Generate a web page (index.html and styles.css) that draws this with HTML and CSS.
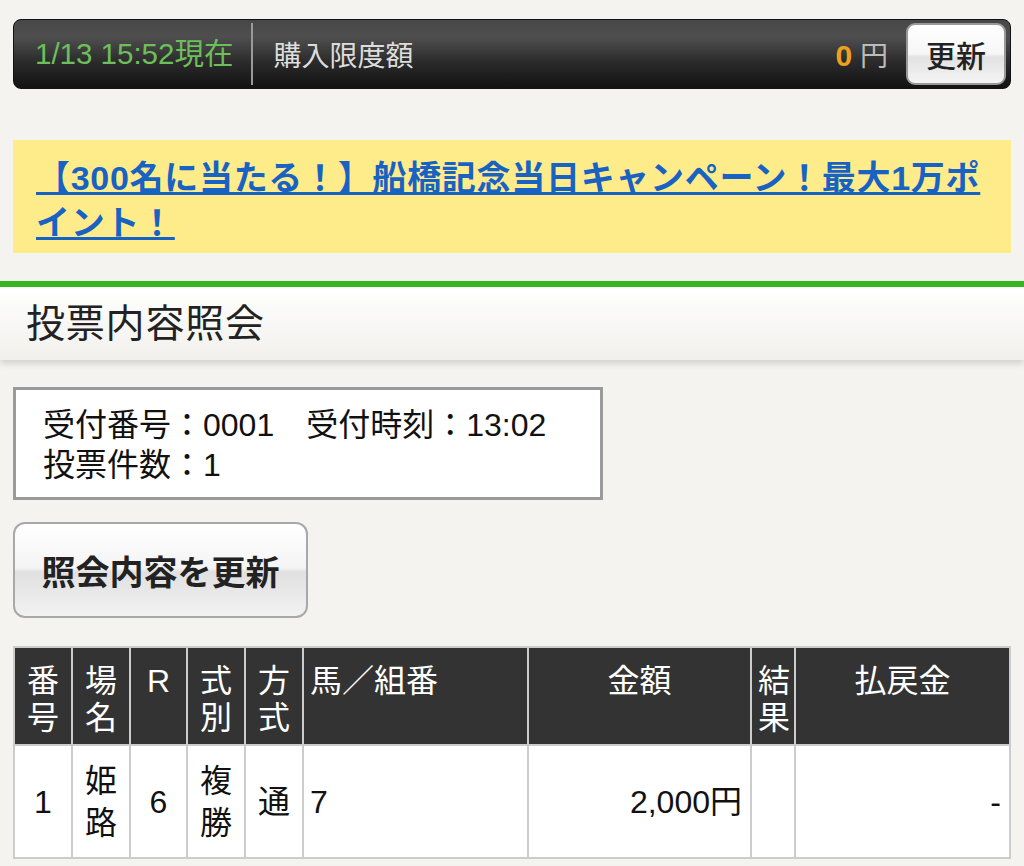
FILE: index.html
```html
<!DOCTYPE html>
<html lang="ja">
<head>
  <meta charset="UTF-8">
  <meta name="viewport" content="width=device-width, initial-scale=1.0">
  <title>投票内容照会</title>
  <link rel="stylesheet" href="styles.css">
</head>
<body>
  <div class="topbar">
    <span class="now">1/13 15:52現在</span>
    <span class="limit-label">購入限度額</span>
    <span class="limit-value"><b>0</b> 円</span>
    <button class="refresh">更新</button>
  </div>

  <div class="banner">
    <a href="#">【300名に当たる！】船橋記念当日キャンペーン！最大1万ポイント！</a>
  </div>

  <div class="page-head">
    <h1>投票内容照会</h1>
  </div>

  <div class="content">
    <div class="info">
      受付番号：0001　受付時刻：13:02<br>
      投票件数：1
    </div>

    <button class="reload">照会内容を更新</button>

    <table class="bets">
      <colgroup>
        <col class="c-narrow">
        <col class="c-narrow">
        <col class="c-r">
        <col class="c-narrow">
        <col class="c-narrow">
        <col class="c-horse">
        <col class="c-amount">
        <col class="c-result">
        <col>
      </colgroup>
      <thead>
        <tr>
          <th>番号</th>
          <th>場名</th>
          <th>R</th>
          <th>式別</th>
          <th>方式</th>
          <th class="left">馬／組番</th>
          <th>金額</th>
          <th>結果</th>
          <th>払戻金</th>
        </tr>
      </thead>
      <tbody>
        <tr>
          <td>1</td>
          <td>姫路</td>
          <td>6</td>
          <td>複勝</td>
          <td>通</td>
          <td class="left">7</td>
          <td class="right">2,000円</td>
          <td></td>
          <td class="right">-</td>
        </tr>
      </tbody>
    </table>
  </div>
</body>
</html>
```

FILE: styles.css
```css
body {
  margin: 0;
  padding: 19px 0 0;
  background-color: #f4f3ef;
  color: #111;
  font-family: "Liberation Sans", "Noto Sans CJK JP", sans-serif;
}
.topbar {
  display: flex;
  align-items: center;
  height: 70px;
  margin: 0 13px;
  box-sizing: border-box;
  border: 1px solid #111;
  border-radius: 8px;
  background: linear-gradient(#474747, #4f4f4f 25%, #2c2c2c 60%, #121212);
  font-size: 28px;
}
.now {
  color: #6cbf5a;
  font-size: 29.5px;
  padding: 0 18px 0 21px;
  line-height: 62px;
  border-right: 2px solid #9a9a9a;
}
.limit-label {
  flex: 1;
  color: #ddd;
  padding-left: 20px;
}
.limit-value {
  color: #bbb;
  margin-right: 18px;
}
.limit-value b {
  color: #f0a020;
  font-size: 30px;
}
.refresh {
  width: 100px;
  height: 62px;
  margin-right: 4px;
  border: 2px solid #999;
  border-radius: 9px;
  background: linear-gradient(#fff, #f6f6f6 50%, #e2e2e2 55%, #f4f4f4);
  color: #222;
  font-family: inherit;
  font-size: 30px;
  font-weight: 500;
}
.banner {
  margin: 51px 13px 0;
  padding: 16px 23px 7px;
  background-color: #feeb8a;
  font-size: 34px;
  letter-spacing: 0.7px;
  line-height: 45px;
  font-weight: bold;
}
.banner a {
  color: #1862c4;
}
.page-head {
  margin-top: 28px;
  border-top: 6px solid #35b51f;
  background: linear-gradient(#fff, #f1f0ec);
  box-shadow: 0 4px 6px rgba(0, 0, 0, 0.13);
}
.page-head h1 {
  margin: 0;
  padding-left: 26px;
  font-size: 39px;
  letter-spacing: 0.8px;
  font-weight: normal;
  line-height: 73px;
  color: #222;
}
.content {
  padding: 27px 13px 0;
}
.info {
  width: 590px;
  box-sizing: border-box;
  padding: 15px 27px 12px;
  border: 3px solid #9a9a9a;
  background-color: #fff;
  font-size: 32px;
  line-height: 40px;
}
.reload {
  display: block;
  width: 295px;
  height: 96px;
  margin-top: 22px;
  border: 2px solid #a8a8a8;
  border-radius: 12px;
  background: linear-gradient(#fff, #f4f4f4 48%, #e0e0e0 52%, #f2f2f2);
  color: #222;
  font-family: inherit;
  font-size: 34px;
  font-weight: bold;
}
.bets {
  width: 100%;
  margin-top: 28px;
  table-layout: fixed;
  border-collapse: collapse;
  font-size: 32px;
}
.c-narrow { width: 58px; }
.c-r { width: 57px; }
.c-horse { width: 225px; }
.c-amount { width: 223px; }
.c-result { width: 44px; }
.bets th,
.bets td {
  border: 2px solid #ccc;
  padding: 0 6px;
}
.bets th {
  height: 98px;
  box-sizing: border-box;
  padding-top: 15px;
  vertical-align: top;
  background-color: #333;
  color: #fff;
  font-weight: normal;
  line-height: 37px;
}
.bets td {
  height: 111px;
  background-color: #fff;
  line-height: 42px;
  text-align: center;
}
.bets .left { text-align: left; }
.bets .right {
  text-align: right;
  padding-right: 8px;
}
```
